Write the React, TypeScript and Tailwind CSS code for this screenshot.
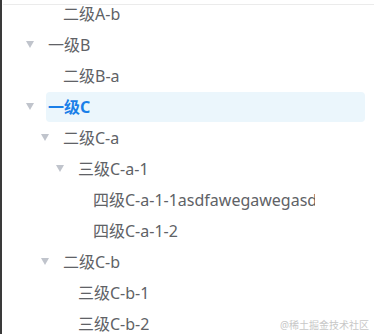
import React from 'react';

// flattened view of the visible (expanded) rows
const ROWS: { label: string; level: number; expandable: boolean; selected?: boolean }[] = [
  { label: '二级A-b', level: 2, expandable: false },
  { label: '一级B', level: 1, expandable: true },
  { label: '二级B-a', level: 2, expandable: false },
  { label: '一级C', level: 1, expandable: true, selected: true },
  { label: '二级C-a', level: 2, expandable: true },
  { label: '三级C-a-1', level: 3, expandable: true },
  { label: '四级C-a-1-1asdfawegawegasdfawegawe', level: 4, expandable: false },
  { label: '四级C-a-1-2', level: 4, expandable: false },
  { label: '二级C-b', level: 2, expandable: true },
  { label: '三级C-b-1', level: 3, expandable: false },
  { label: '三级C-b-2', level: 3, expandable: false },
];

const Caret = () => (
  <svg width="8" height="7" viewBox="0 0 8 7" className="block">
    <path d="M0 0 L8 0 L4 7 Z" fill="#c0c4cc" />
  </svg>
);

const App: React.FC = () => {
  return (
    <div
      className="relative h-[334px] w-[374px] overflow-hidden bg-white border-l-2 border-[#3a3a3a]"
      style={{ fontFamily: '"Noto Sans", "Noto Sans CJK SC", sans-serif' }}
    >
      {/* top border of the scroll area */}
      <div className="absolute left-[1px] right-0 top-[4px] h-px bg-[#ebebeb]" />

      <div className="-mt-[2px] flex flex-col">
        {ROWS.map((row, i) => {
          const indent = 24 + (row.level - 1) * 15;
          return (
            <div key={i} className="flex h-[31px] items-center pr-[9px]" style={{ paddingLeft: indent }}>
              <div className="flex w-[20px] shrink-0 items-center">
                {row.expandable && <Caret />}
              </div>
              <div
                className={
                  'flex h-[30px] flex-1 items-center rounded-[4px] pl-[2px] ' +
                  (row.selected ? 'bg-[#ebf6fc]' : '')
                }
              >
                <span
                  className={
                    'block max-w-[222px] overflow-hidden whitespace-nowrap text-[16px] leading-[22px] ' +
                    (row.selected ? 'font-bold text-[#1a7fe8]' : 'text-[#606266]')
                  }
                >
                  {row.label}
                </span>
              </div>
            </div>
          );
        })}
      </div>

      <div className="absolute bottom-[3px] right-[5px] text-[10px] leading-[12px] text-[#c8c8c8]">
        @稀土掘金技术社区
      </div>
    </div>
  );
};

export default App;
